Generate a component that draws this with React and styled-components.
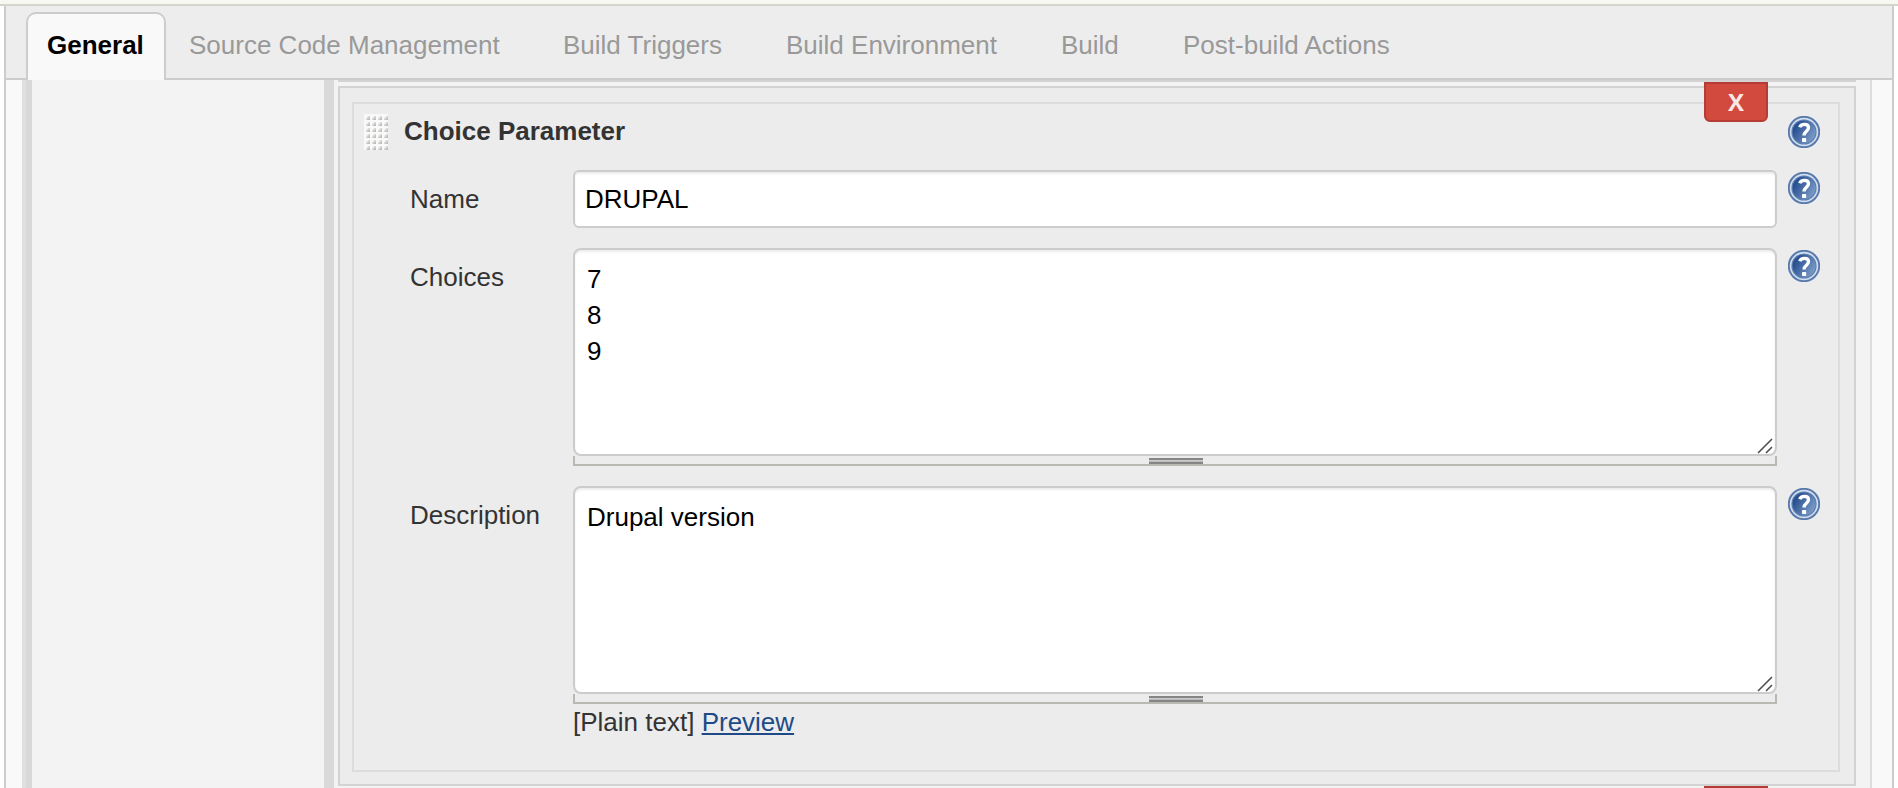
import React from "react";
import styled, { createGlobalStyle } from "styled-components";

const GlobalStyle = createGlobalStyle`
  *, *::before, *::after { box-sizing: border-box; }
  html, body { margin: 0; padding: 0; }
  body {
    height: 788px;
    overflow: hidden;
    background: #fff;
    color: #333;
    font: 26px/36px "Liberation Sans", Arial, Helvetica, sans-serif;
  }
`;

const Page = styled.div`
  display: flex;
  flex-direction: column;
  height: 788px;
  overflow: hidden;
`;

const TopStrip = styled.div`
  flex: none;
  height: 6px;
  background: #f7f8f1;
  border-bottom: 2px solid #d4d5ce;
`;

const Config = styled.main`
  flex: 1;
  min-height: 0;
  display: flex;
  flex-direction: column;
  margin: 0 4px;
  border: solid #ccc;
  border-width: 0 2px;
  background: #f9f9f9;
`;

const TabBar = styled.nav`
  flex: none;
  display: flex;
  align-items: flex-end;
  height: 74px;
  padding-left: 20px;
  background: #ededed;
  border-bottom: 2px solid #ccc;
`;

const Tab = styled.div`
  flex: none;
  width: ${(p) => p.$width}px;
  height: 68px;
  margin-bottom: -2px;
  padding: 13px 0 0 ${(p) => (p.$active ? 19 : 21)}px;
  white-space: nowrap;
  color: ${(p) => (p.$active ? "#000" : "#999")};
  font-weight: ${(p) => (p.$active ? 700 : 400)};
  letter-spacing: ${(p) => p.$spacing || 0}px;
  border: 2px solid ${(p) => (p.$active ? "#ccc" : "transparent")};
  border-bottom: 0;
  border-radius: 10px 10px 0 0;
  background: ${(p) => (p.$active ? "#f9f9f9" : "transparent")};
`;

const Body = styled.div`
  flex: 1;
  min-height: 0;
  display: flex;
  margin: 0 20px 0 16px;
  border-left: 4px solid #dfdfdf;
  border-right: 2px solid #ddd;
  background: #f3f3f3;
`;

const Indent = styled.div`
  flex: none;
  width: 308px;
  border-left: 6px solid #d8d8d8;
  border-right: 10px solid #d9d9d9;
`;

const Parameters = styled.div`
  flex: 1;
  min-width: 0;
  padding: 0 14px 0 4px;
`;

const PreviousEdge = styled.div`
  height: 2px;
  margin-bottom: 4px;
  background: #d3d3d3;
`;

const Chunk = styled.section`
  position: relative;
  height: 700px;
  padding: 14px 14px 12px 12px;
  border: 2px solid #d3d3d3;
  background: #ececec;
`;

const DeleteButton = styled.button`
  position: absolute;
  top: ${(p) => p.$top}px;
  right: 86px;
  width: 64px;
  height: 40px;
  padding: 0;
  border: 2px solid #b53c35;
  border-radius: 0 0 6px 6px;
  background: #d24a3e;
  color: #f7e8e6;
  font: 700 24px/34px "Open Sans", "Noto Sans", sans-serif;
  text-align: center;
`;

const Panel = styled.div`
  height: 670px;
  border: 2px solid #dcdcdc;
  padding: 10px 18px 0 10px;
`;

const Header = styled.header`
  display: flex;
  align-items: flex-start;
  height: 56px;
`;

const Grip = styled.svg`
  flex: none;
  display: block;
`;

const Title = styled.h2`
  flex: 1;
  margin: -1px 0 0 16px;
  font-size: 26px;
  line-height: 36px;
  font-weight: 700;
`;

const HelpSlot = styled.div`
  padding-top: 2px;
  height: 34px;
`;

const Row = styled.div`
  display: grid;
  grid-template-columns: 152px 1204px 32px;
  column-gap: 0;
  justify-content: space-between;
  padding-left: 46px;
  margin-bottom: ${(p) => p.$gap}px;
`;

const Label = styled.label`
  padding-top: 11px;
`;

const Field = styled.div`
  position: relative;
`;

const TextInput = styled.input`
  display: block;
  width: 100%;
  height: 58px;
  padding: 0 10px;
  border: 2px solid #ccc;
  border-radius: 6px;
  outline: 0;
  background: #fff;
  color: #000;
  font: inherit;
  box-shadow: inset 0 2px 2px rgba(0, 0, 0, 0.075);
`;

const TextArea = styled.textarea`
  display: block;
  width: 100%;
  height: 208px;
  padding: 11px 12px;
  border: 2px solid #ccc;
  border-radius: 8px;
  outline: 0;
  resize: none;
  overflow: hidden;
  background: #fff;
  color: #000;
  font: inherit;
  box-shadow: inset 0 2px 2px rgba(0, 0, 0, 0.075);
`;

const Corner = styled.svg`
  position: absolute;
  right: 3px;
  top: 189px;
`;

const ResizeBar = styled.div`
  display: flex;
  justify-content: center;
  height: 10px;
  padding: 2px 0 0;
  border: 2px solid #b9b9b4;
  border-top: 0;
`;

const ResizeHandle = styled.div`
  width: 54px;
  height: 6px;
  margin-left: 2px;
  border: solid #858585;
  border-width: 2px 0;
  background: linear-gradient(#ccc 1px, #bbb 1px);
`;

const Markup = styled.div`
  padding-top: 0;
`;

const PreviewLink = styled.a`
  color: #204a87;
  text-decoration: underline;
  text-decoration-thickness: 2px;
  text-underline-offset: 2px;
`;

function DragGrip() {
  return (
    <Grip width="24" height="36" viewBox="0 0 24 36">
      <defs>
        <linearGradient id="dot" x1="0" y1="0" x2="1" y2="1">
          <stop offset="0.15" stopColor="#eee" />
          <stop offset="0.9" stopColor="#b7b7b2" />
        </linearGradient>
        <pattern id="dots" width="6" height="6" patternUnits="userSpaceOnUse">
          <rect width="6" height="6" fill="#f9f9f9" />
          <path d="M2 4.2 4.2 2H6V6H2Z" fill="url(#dot)" />
        </pattern>
      </defs>
      <rect width="24" height="36" fill="url(#dots)" />
    </Grip>
  );
}

function HelpIcon({ id }) {
  return (
    <svg width="32" height="32" viewBox="0 0 32 32" display="block" role="img" aria-label="Help">
      <defs>
        <linearGradient id={id} x1="0" y1="0.2" x2="1" y2="0.8">
          <stop offset="0.15" stopColor="#285091" />
          <stop offset="0.95" stopColor="#7f9fc9" />
        </linearGradient>
      </defs>
      <circle cx="16" cy="16" r="15.2" fill="#d0def0" stroke="#5779ac" strokeWidth="1.9" />
      <circle cx="16" cy="16" r="12" fill={`url(#${id})`} stroke="#5e7eaf" strokeWidth="1.2" />
      <path
        d="M11.8 11.2C12.8 7.6 20.5 7 20.5 11.8C20.5 15.2 16 15.2 16 19.4"
        fill="none"
        stroke="#fff"
        strokeWidth="3.3"
      />
      <rect x="14" y="22" width="4.2" height="4" rx="0.8" fill="#fff" />
    </svg>
  );
}

function ResizableArea({ id, value }) {
  return (
    <>
      <TextArea id={id} defaultValue={value} spellCheck={false} />
      <Corner width="18" height="18" viewBox="0 0 18 18">
        <path d="M2 16 16 2M10 16l6-6" fill="none" stroke="#505050" strokeWidth="1.6" />
      </Corner>
      <ResizeBar>
        <ResizeHandle />
      </ResizeBar>
    </>
  );
}

const tabs = [
  { label: "General", width: 140, active: true },
  { label: "Source Code Management", width: 374 },
  { label: "Build Triggers", width: 223 },
  { label: "Build Environment", width: 275 },
  { label: "Build", width: 122 },
  { label: "Post-build Actions", width: 260 },
];

export default function App() {
  return (
    <Page>
      <GlobalStyle />
      <TopStrip />
      <Config>
        <TabBar>
          {tabs.map((t, i) => (
            <Tab key={t.label} $width={t.width + (i === 0 ? 18 - 18 : 0)} $active={t.active}
              style={undefined}>
              {t.label}
            </Tab>
          ))}
        </TabBar>
        <Body>
          <Indent />
          <Parameters>
            <PreviousEdge />
            <Chunk>
              <DeleteButton $top={-6}>X</DeleteButton>
              <Panel>
                <Header>
                  <DragGrip />
                  <Title>Choice Parameter</Title>
                  <HelpSlot>
                    <HelpIcon id="help-parameter" />
                  </HelpSlot>
                </Header>
                <Row $gap={20}>
                  <Label htmlFor="name">Name</Label>
                  <Field>
                    <TextInput id="name" defaultValue="DRUPAL" spellCheck={false} />
                  </Field>
                  <HelpSlot>
                    <HelpIcon id="help-name" />
                  </HelpSlot>
                </Row>
                <Row $gap={20}>
                  <Label htmlFor="choices">Choices</Label>
                  <Field>
                    <ResizableArea id="choices" value={"7\n8\n9"} />
                  </Field>
                  <HelpSlot>
                    <HelpIcon id="help-choices" />
                  </HelpSlot>
                </Row>
                <Row $gap={0}>
                  <Label htmlFor="description">Description</Label>
                  <Field>
                    <ResizableArea id="description" value="Drupal version" />
                    <Markup>
                      [Plain text] <PreviewLink>Preview</PreviewLink>
                    </Markup>
                  </Field>
                  <HelpSlot>
                    <HelpIcon id="help-description" />
                  </HelpSlot>
                </Row>
              </Panel>
              <DeleteButton $top={698}>X</DeleteButton>
            </Chunk>
          </Parameters>
        </Body>
      </Config>
    </Page>
  );
}
